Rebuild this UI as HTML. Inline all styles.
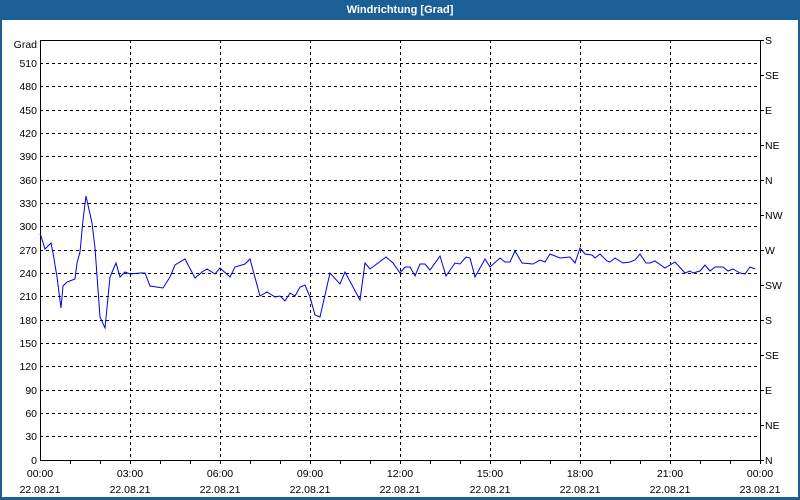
<!DOCTYPE html>
<html><head><meta charset="utf-8"><style>
html,body{margin:0;padding:0;background:#fff;}
body{width:800px;height:500px;overflow:hidden;}
svg{display:block;font-family:"Liberation Sans",sans-serif;font-size:10.5px;}
</style></head><body>
<svg width="800" height="500" xmlns="http://www.w3.org/2000/svg">
<rect x="0" y="0" width="800" height="500" fill="#1c5f96"/>
<rect x="2" y="20" width="796" height="477" fill="#fff"/>
<text x="400" y="13" fill="#fff" font-weight="bold" text-anchor="middle" font-size="11">Windrichtung [Grad]</text>
<g stroke="#000" stroke-dasharray="3,3" stroke-width="1" shape-rendering="crispEdges">
<line x1="40" y1="63.5" x2="760" y2="63.5"/><line x1="40" y1="86.5" x2="760" y2="86.5"/>
<line x1="40" y1="110.5" x2="760" y2="110.5"/><line x1="40" y1="133.5" x2="760" y2="133.5"/>
<line x1="40" y1="156.5" x2="760" y2="156.5"/><line x1="40" y1="180.5" x2="760" y2="180.5"/>
<line x1="40" y1="203.5" x2="760" y2="203.5"/><line x1="40" y1="226.5" x2="760" y2="226.5"/>
<line x1="40" y1="250.5" x2="760" y2="250.5"/><line x1="40" y1="273.5" x2="760" y2="273.5"/>
<line x1="40" y1="296.5" x2="760" y2="296.5"/><line x1="40" y1="320.5" x2="760" y2="320.5"/>
<line x1="40" y1="343.5" x2="760" y2="343.5"/><line x1="40" y1="366.5" x2="760" y2="366.5"/>
<line x1="40" y1="390.5" x2="760" y2="390.5"/><line x1="40" y1="413.5" x2="760" y2="413.5"/>
<line x1="40" y1="436.5" x2="760" y2="436.5"/>
<line x1="130.5" y1="40" x2="130.5" y2="460"/><line x1="220.5" y1="40" x2="220.5" y2="460"/>
<line x1="310.5" y1="40" x2="310.5" y2="460"/><line x1="400.5" y1="40" x2="400.5" y2="460"/>
<line x1="490.5" y1="40" x2="490.5" y2="460"/><line x1="580.5" y1="40" x2="580.5" y2="460"/>
<line x1="670.5" y1="40" x2="670.5" y2="460"/>
</g>
<g stroke="#000" stroke-width="1" shape-rendering="crispEdges" fill="none">
<path d="M40.5 40.5H760.5V460.5H40.5Z"/>
<path d="M70.5 460v4M100.5 460v4M130.5 460v4M160.5 460v4M190.5 460v4M220.5 460v4M250.5 460v4M280.5 460v4M310.5 460v4M340.5 460v4M370.5 460v4M400.5 460v4M430.5 460v4M460.5 460v4M490.5 460v4M520.5 460v4M550.5 460v4M580.5 460v4M610.5 460v4M640.5 460v4M670.5 460v4M700.5 460v4M730.5 460v4M760.5 460v4"/>
<path d="M760 40.5h4M760 75.5h4M760 110.5h4M760 145.5h4M760 180.5h4M760 215.5h4M760 250.5h4M760 285.5h4M760 320.5h4M760 355.5h4M760 390.5h4M760 425.5h4M760 460.5h4"/>
</g>
<polyline fill="none" stroke="#0000e0" stroke-width="1" points="40,234 41,236 45,249 51,243 53,253 57,277 61,308 63,286 67,282 75,279 77,263 80,252 83,220 86,196 92,223 95,248 100,317 105,328 110,277 116,263 120,277 125,272 130,274 140,273 145,273 150,286 163,288 170,277 175,265 185,259 195,278 202,272 207,269 215,274 220,268 230,277 235,267 245,264 250,259 260,296 267,292 275,297 280,296 285,301 290,293 295,296 300,287 305,285 310,297 315,315 320,317 325,295 330,273 340,284 345,272 360,300 365,263 370,269 378,263 386,257 393,263 400,273 405,267 410,267 415,276 420,264 425,264 430,270 440,256 446,276 455,263 460,264 466,257 470,258 475,277 485,259 490,267 500,258 505,262 510,262 515,251 522,263 533,264 540,260 545,262 550,254 560,258 570,257 575,263 580,248 585,254 592,255 595,258 600,254 607,261 610,262 615,258 623,263 630,262 635,260 640,254 646,263 650,263 655,261 665,268 675,262 685,273 690,271 693,273 700,271 705,265 710,271 715,267 723,267 728,271 733,269 740,273 745,274 750,267 755,269"/>
<g fill="#000" text-anchor="end">
<text x="37" y="48">Grad</text>
<text x="37" y="67">510</text><text x="37" y="90">480</text><text x="37" y="114">450</text>
<text x="37" y="137">420</text><text x="37" y="160">390</text><text x="37" y="184">360</text>
<text x="37" y="207">330</text><text x="37" y="230">300</text><text x="37" y="254">270</text>
<text x="37" y="277">240</text><text x="37" y="300">210</text><text x="37" y="324">180</text>
<text x="37" y="347">150</text><text x="37" y="370">120</text><text x="37" y="394">90</text>
<text x="37" y="417">60</text><text x="37" y="440">30</text><text x="37" y="464">0</text>
</g>
<g fill="#000">
<text x="765" y="44">S</text><text x="765" y="79">SE</text><text x="765" y="114">E</text>
<text x="765" y="149">NE</text><text x="765" y="184">N</text><text x="765" y="219">NW</text>
<text x="765" y="254">W</text><text x="765" y="289">SW</text><text x="765" y="324">S</text>
<text x="765" y="359">SE</text><text x="765" y="394">E</text><text x="765" y="429">NE</text>
<text x="765" y="464">N</text>
</g>
<g fill="#000" text-anchor="middle">
<text x="40" y="477">00:00</text><text x="40" y="493">22.08.21</text>
<text x="130" y="477">03:00</text><text x="130" y="493">22.08.21</text>
<text x="220" y="477">06:00</text><text x="220" y="493">22.08.21</text>
<text x="310" y="477">09:00</text><text x="310" y="493">22.08.21</text>
<text x="400" y="477">12:00</text><text x="400" y="493">22.08.21</text>
<text x="490" y="477">15:00</text><text x="490" y="493">22.08.21</text>
<text x="580" y="477">18:00</text><text x="580" y="493">22.08.21</text>
<text x="670" y="477">21:00</text><text x="670" y="493">22.08.21</text>
<text x="760" y="477">00:00</text><text x="760" y="493">23.08.21</text>
</g>
</svg>
</body></html>
